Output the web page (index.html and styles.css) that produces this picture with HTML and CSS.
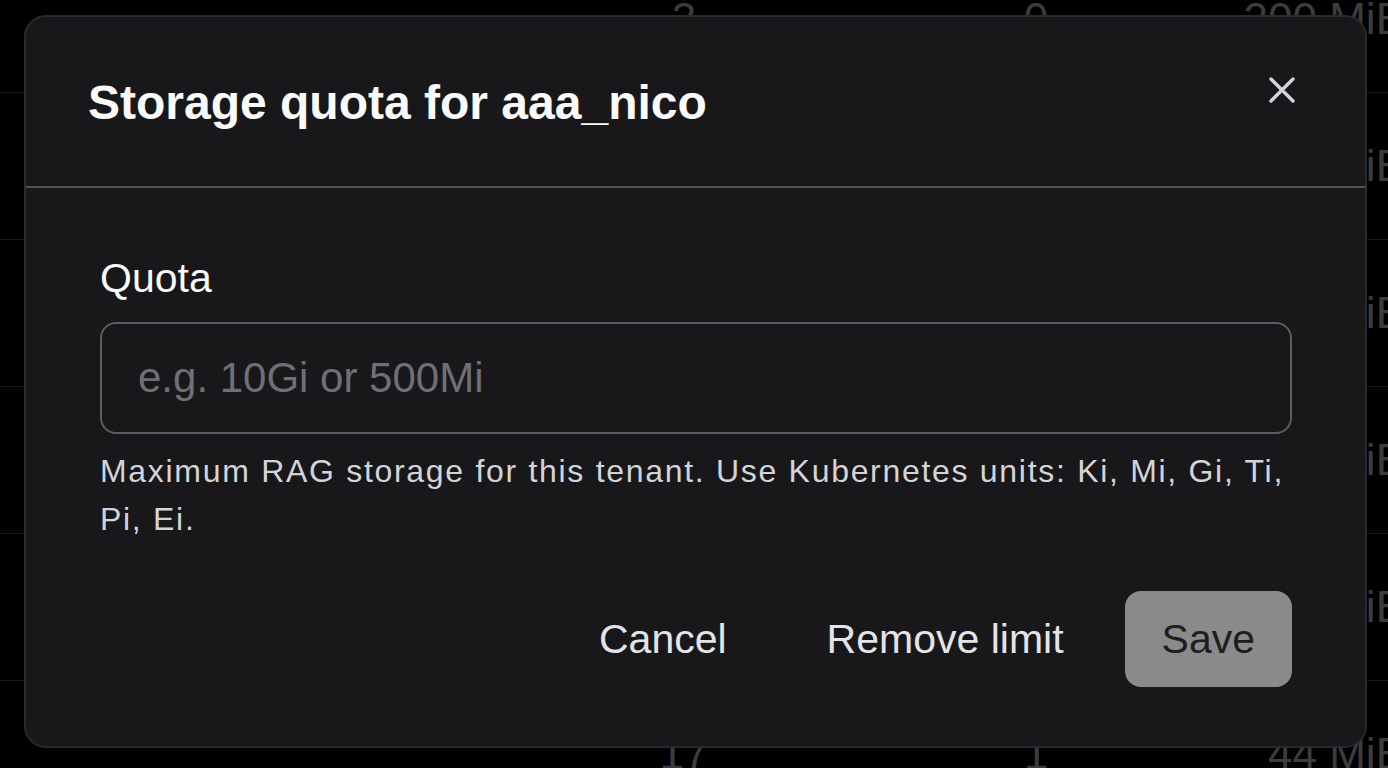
FILE: index.html
```html
<!DOCTYPE html>
<html lang="en">
<head>
<meta charset="utf-8">
<title>Storage quota</title>
<link rel="stylesheet" href="styles.css">
</head>
<body>
<div class="table" aria-hidden="true">
  <div class="row"><span class="num">3</span><span class="num alt">0</span><span class="size">200 MiB</span></div>
  <div class="row"><span class="num">5</span><span class="num alt">2</span><span class="size">120 MiB</span></div>
  <div class="row"><span class="num">8</span><span class="num alt">1</span><span class="size">310 MiB</span></div>
  <div class="row"><span class="num">2</span><span class="num alt">0</span><span class="size">64 MiB</span></div>
  <div class="row"><span class="num">4</span><span class="num alt">3</span><span class="size">98 MiB</span></div>
  <div class="row"><span class="num">17</span><span class="num alt">1</span><span class="size">44 MiB</span></div>
</div>

<div class="modal" role="dialog" aria-labelledby="modal-title">
  <div class="modal-header">
    <h2 id="modal-title" class="modal-title">Storage quota for aaa_nico</h2>
    <button class="close-btn" aria-label="Close">
      <svg width="28" height="28" viewBox="0 0 28 28" fill="none" stroke="currentColor" stroke-width="3.4" stroke-linecap="round"><path d="M3 3 L25 25 M25 3 L3 25"/></svg>
    </button>
  </div>
  <div class="modal-body">
    <label class="field-label" for="quota">Quota</label>
    <input id="quota" class="field-input" type="text" placeholder="e.g. 10Gi or 500Mi">
    <p class="field-help">Maximum RAG storage for this tenant. Use Kubernetes units: Ki, Mi, Gi, Ti, Pi, Ei.</p>
    <div class="modal-footer">
      <button class="btn btn-ghost">Cancel</button>
      <button class="btn btn-ghost">Remove limit</button>
      <button class="btn btn-save" disabled>Save</button>
    </div>
  </div>
</div>
</body>
</html>
```

FILE: styles.css
```css
* { box-sizing: border-box; }

html, body {
  margin: 0;
  padding: 0;
  width: 1388px;
  height: 768px;
  overflow: hidden;
  background: #000;
  font-family: "Liberation Sans", Arial, Helvetica, sans-serif;
}

body { position: relative; }

/* Background table */
.table {
  margin-top: -54px;
  width: 1405px;
  height: 822px;
  overflow: hidden;
}

.row {
  display: grid;
  grid-template-columns: 584px 200px 152px 200px 269px;
  align-items: center;
  height: 147px;
  border-bottom: 1px solid #1b1b1c;
  color: #3c3c3f;
  font-size: 44px;
}

.row .num { grid-column: 2; text-align: center; }
.row .num.alt { grid-column: 4; }
.row .size { grid-column: 5; text-align: right; }

/* Modal */
.modal {
  position: absolute;
  left: 24px;
  top: 15px;
  width: 1343px;
  background: #18181b;
  border: 2px solid #2a2a2e;
  border-radius: 22px;
  color: #fafafa;
}

.modal-header {
  display: flex;
  justify-content: space-between;
  align-items: flex-start;
  height: 171px;
  padding: 58px 69px 0 62px;
  border-bottom: 2px solid #505055;
}

.modal-title {
  margin: 0;
  font-size: 48px;
  font-weight: 700;
  line-height: 55px;
  color: #fafafa;
}

.close-btn {
  margin-top: 1px;
  padding: 0;
  border: 0;
  background: transparent;
  color: #d4d4d8;
  width: 28px;
  height: 28px;
  display: flex;
  cursor: pointer;
}

.modal-body {
  display: flex;
  flex-direction: column;
  padding: 66px 73px 59px 74px;
}

.field-label {
  font-size: 41px;
  line-height: 48px;
  color: #fafafa;
}

.field-input {
  margin-top: 20px;
  height: 112px;
  width: 100%;
  padding: 0 36px;
  background: #18181b;
  border: 2px solid #5c5c61;
  border-radius: 16px;
  font-family: inherit;
  font-size: 42px;
  color: #fafafa;
  outline: none;
}

.field-input::placeholder { color: #6f6f75; }

.field-help {
  margin: 13px 0 0;
  font-size: 32px;
  line-height: 48px;
  letter-spacing: 1.7px;
  color: #d4d4d8;
}

.modal-footer {
  margin-top: 48px;
  display: flex;
  justify-content: flex-end;
  gap: 26px;
}

.btn {
  height: 96px;
  padding: 0 37px;
  border: 0;
  border-radius: 16px;
  background: transparent;
  font-family: inherit;
  font-size: 41px;
  color: #e4e4e7;
  cursor: pointer;
}

.btn-save {
  margin-left: -2px;
  background: #8a8a8b;
  color: #1e1e21;
}
```
